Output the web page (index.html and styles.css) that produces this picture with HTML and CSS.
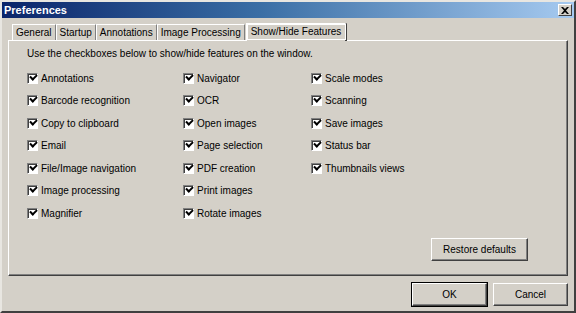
FILE: index.html
```html
<!DOCTYPE html>
<html lang="en">
<head>
    <meta charset="UTF-8">
    <title>Preferences</title>
    <link rel="stylesheet" href="styles.css">
</head>
<body>
    <div class="window">
        <div class="titlebar">
            <span class="title">Preferences</span>
            <span class="close-btn">
                <svg width="8" height="7" viewBox="0 0 8 7"><path d="M0 0h2l2 2 2-2h2L5 3.5 8 7H6L4 5 2 7H0l3-3.5z" fill="#000"/></svg>
            </span>
        </div>

        <div class="tabs">
            <span class="tab">General</span>
            <span class="tab">Startup</span>
            <span class="tab">Annotations</span>
            <span class="tab">Image Processing</span>
            <span class="tab active">Show/Hide Features</span>
        </div>

        <div class="panel">
            <p class="intro">Use the checkboxes below to show/hide features on the window.</p>
            <div class="features">
                <div class="feature-col">
                    <label class="feature"><span class="check"></span>Annotations</label>
                    <label class="feature"><span class="check"></span>Barcode recognition</label>
                    <label class="feature"><span class="check"></span>Copy to clipboard</label>
                    <label class="feature"><span class="check"></span>Email</label>
                    <label class="feature"><span class="check"></span>File/Image navigation</label>
                    <label class="feature"><span class="check"></span>Image processing</label>
                    <label class="feature"><span class="check"></span>Magnifier</label>
                </div>
                <div class="feature-col">
                    <label class="feature"><span class="check"></span>Navigator</label>
                    <label class="feature"><span class="check"></span>OCR</label>
                    <label class="feature"><span class="check"></span>Open images</label>
                    <label class="feature"><span class="check"></span>Page selection</label>
                    <label class="feature"><span class="check"></span>PDF creation</label>
                    <label class="feature"><span class="check"></span>Print images</label>
                    <label class="feature"><span class="check"></span>Rotate images</label>
                </div>
                <div class="feature-col">
                    <label class="feature"><span class="check"></span>Scale modes</label>
                    <label class="feature"><span class="check"></span>Scanning</label>
                    <label class="feature"><span class="check"></span>Save images</label>
                    <label class="feature"><span class="check"></span>Status bar</label>
                    <label class="feature"><span class="check"></span>Thumbnails views</label>
                </div>
            </div>
            <div class="panel-actions">
                <button class="btn restore">Restore defaults</button>
            </div>
        </div>

        <div class="footer">
            <button class="btn default">OK</button>
            <button class="btn">Cancel</button>
        </div>
    </div>
</body>
</html>
```

FILE: styles.css
```css
body {
    margin: 0;
    padding: 0;
    background-color: #d4d0c8;
    font-family: 'Liberation Sans', Arial, sans-serif;
    font-size: 10px;
    color: #000;
}
.window {
    width: 576px;
    height: 313px;
    box-sizing: border-box;
    background-color: #d4d0c8;
    border: 2px solid;
    border-color: #e8e6e1 #404040 #404040 #e8e6e1;
    display: flex;
    flex-direction: column;
}
.titlebar {
    height: 16px;
    background: linear-gradient(to right, #0a246a 0%, #3a6ea5 45%, #a6caf0 100%);
    display: flex;
    align-items: center;
    justify-content: space-between;
    padding: 0 2px;
}
.title {
    color: #fff;
    font-weight: bold;
    font-size: 11px;
}
.close-btn {
    width: 14px;
    height: 12px;
    box-sizing: border-box;
    background-color: #d4d0c8;
    border: 1px solid;
    border-color: #fff #404040 #404040 #fff;
    display: flex;
    align-items: center;
    justify-content: center;
}
.tabs {
    display: flex;
    padding: 4px 0 0 10px;
    height: 18px;
    align-items: flex-end;
}
.tab {
    height: 15px;
    line-height: 15px;
    padding: 0 3px;
    border-left: 1px solid #fff;
    border-right: 1px solid #808080;
    border-top: 1px solid #fff;
    white-space: nowrap;
}
.tab.active {
    height: 17px;
    line-height: 16px;
    padding: 0 4px;
    margin-left: 1px;
    background-color: #d4d0c8;
    border-right: 2px solid #404040;
    margin-bottom: -1px;
    position: relative;
    z-index: 1;
    outline: 1px solid #fff;
    outline-offset: -2px;
}
.panel {
    margin: 0 6px;
    height: 236px;
    box-sizing: border-box;
    border: 1px solid;
    border-color: #fff #404040 #404040 #fff;
    box-shadow: inset -1px -1px 0 #808080;
    padding: 0 18px;
    display: flex;
    flex-direction: column;
}
.intro {
    margin: 6px 0 0 0;
    line-height: 14px;
}
.features {
    display: grid;
    grid-template-columns: 156px 128px 1fr;
    margin-top: 6px;
}
.feature {
    display: flex;
    align-items: center;
    height: 22.5px;
    white-space: nowrap;
}
.check {
    width: 11px;
    height: 11px;
    box-sizing: border-box;
    margin-right: 3px;
    background-color: #fff;
    border: 1px solid;
    border-color: #808080 #fff #fff #808080;
    box-shadow: inset 1px 1px 0 #404040;
    position: relative;
}
.check::after {
    content: '';
    position: absolute;
    left: 2px;
    top: 0px;
    width: 5px;
    height: 3px;
    border-left: 2px solid #000;
    border-bottom: 2px solid #000;
    transform: rotate(-45deg);
}
.panel-actions {
    display: flex;
    justify-content: flex-end;
    margin-top: auto;
    padding: 0 21px 14px 0;
}
.btn {
    font-family: 'Liberation Sans', Arial, sans-serif;
    font-size: 10px;
    height: 23px;
    background-color: #d4d0c8;
    border: 1px solid;
    border-color: #fff #404040 #404040 #fff;
    box-shadow: inset -1px -1px 0 #808080;
    padding: 0;
    color: #000;
}
.restore {
    width: 97px;
}
.footer {
    display: flex;
    justify-content: flex-end;
    gap: 6px;
    padding: 7px 6px 0 0;
}
.footer .btn {
    width: 75px;
}
.btn.default {
    outline: 1px solid #000;
    outline-offset: 0;
}
```
